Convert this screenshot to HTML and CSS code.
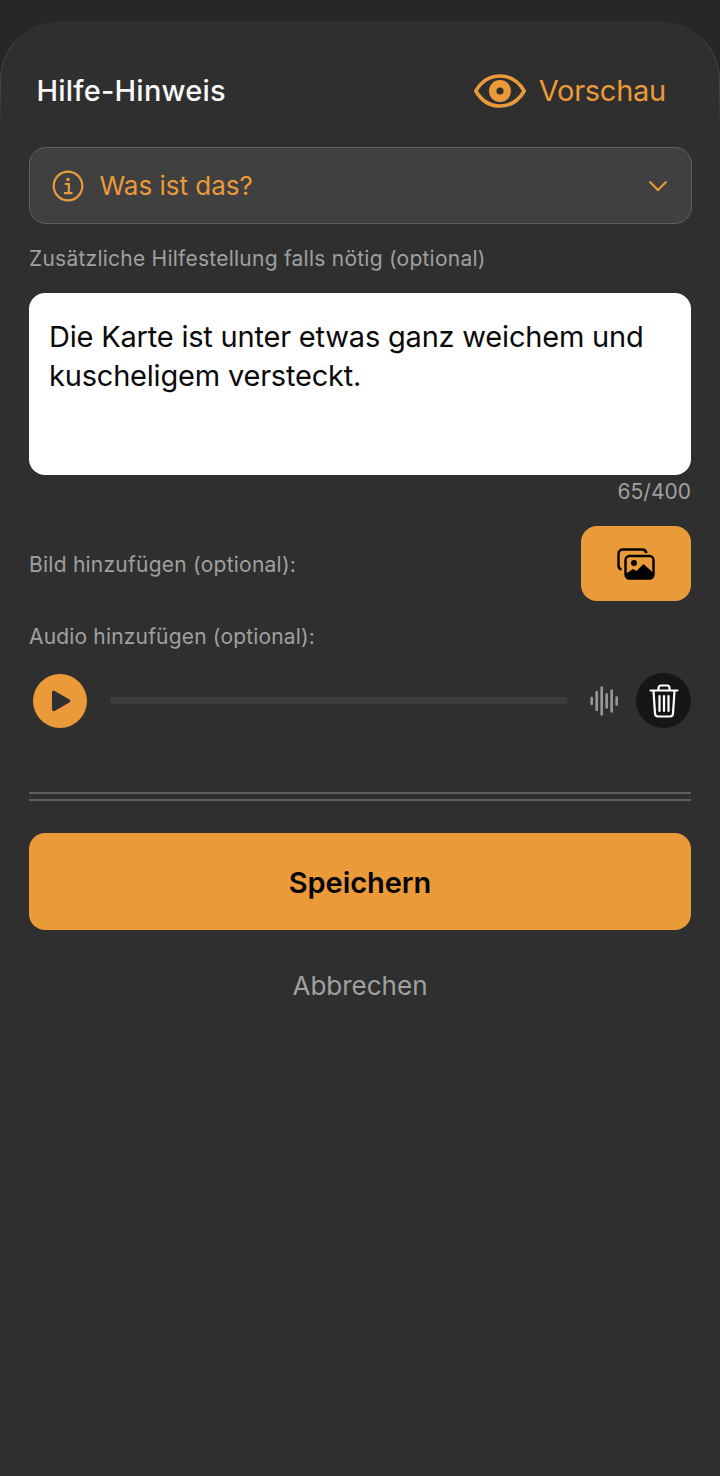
FILE: index.html
```html
<!DOCTYPE html>
<html lang="de">
<head>
<meta charset="utf-8">
<title>Hilfe-Hinweis</title>
<link rel="stylesheet" href="styles.css">
</head>
<body>
<main class="sheet">
  <header class="head">
    <h1 class="title">Hilfe-Hinweis</h1>
    <div class="preview">
      <svg class="eye" viewBox="0 0 52 34" fill="none">
        <path d="M1.800 17C7 8 15.500 2 26 2s19 6 24.200 15C45 26 36.500 32 26 32S7 26 1.800 17Z" stroke="#EB9A3A" stroke-width="3.600"/>
        <circle cx="26" cy="17" r="11" fill="#EB9A3A"/>
        <circle cx="26" cy="17" r="3.600" fill="#2F2F2F"/>
      </svg>
      <span>Vorschau</span>
    </div>
  </header>

  <div class="accordion">
    <svg class="info" viewBox="0 0 32 32" fill="none">
      <circle cx="16" cy="16" r="14.300" stroke="#EB9A3A" stroke-width="2.200"/>
      <circle cx="16" cy="9.500" r="1.800" fill="#EB9A3A"/>
      <path d="M12.800 14h4v9M12 23.200h8.500" stroke="#EB9A3A" stroke-width="2.200"/>
    </svg>
    <span class="accordion-text">Was ist das?</span>
    <svg class="chev" viewBox="0 0 20 12" fill="none"><path d="M1.500 1.500 10 10l8.500-8.500" stroke="#EB9A3A" stroke-width="2"/></svg>
  </div>

  <p class="label hint">Zusätzliche Hilfestellung falls nötig (optional)</p>
  <div class="textbox">Die Karte ist unter etwas ganz weichem und kuscheligem versteckt.</div>
  <p class="counter">65/400</p>

  <div class="image-row">
    <span class="label image-label">Bild hinzufügen (optional):</span>
    <button class="image-btn" type="button">
      <svg class="pics" viewBox="0 0 38 32" fill="none">
        <path d="M4.500 21.500C2.500 21 1.500 19.500 1.500 17.500V6C1.500 3 3.500 1.500 6 1.500h19c2.500 0 4 1.200 4.500 3.500" stroke="#000" stroke-width="2.400"/>
        <rect x="8.500" y="8" width="28" height="22.500" rx="4" stroke="#000" stroke-width="2.400"/>
        <circle cx="17" cy="15" r="3" fill="#000"/>
        <path d="M8.500 26 16 21l3.500 2 7-7 10 9v2c0 2-1.500 3.500-4 3.500h-20c-2.500 0-4-1.500-4-3.500Z" fill="#000"/>
      </svg>
    </button>
  </div>

  <p class="label audio-label">Audio hinzufügen (optional):</p>
  <div class="player">
    <span class="play">
      <svg class="play-icon" viewBox="0 0 20 22"><path d="M1 2.500C1 1 2.400.4 3.600 1.100l14.800 8.500c1.200.7 1.200 2.100 0 2.800L3.600 20.900C2.400 21.600 1 21 1 19.500Z" fill="#2F2F2F"/></svg>
    </span>
    <span class="track"></span>
    <svg class="wave" viewBox="0 0 28 30" fill="none" stroke="#999" stroke-width="2.600" stroke-linecap="round">
      <path d="M1.700 12v6M6.700 6v18M11.700 1.500v27M16.700 8.500v13M21.700 4.500v21M26.700 11.500v7"/>
    </svg>
    <span class="trash">
      <svg class="trash-icon" viewBox="0 0 30 34" fill="none" stroke="#fff" stroke-width="2.200" stroke-linecap="round" stroke-linejoin="round">
        <path d="M1.500 6.500h27M9.500 6V4c0-1.500 1-2.500 2.500-2.500h6c1.500 0 2.500 1 2.500 2.500v2M4.500 7l1.500 22.500c.1 2 1.300 3 3 3h12c1.700 0 2.900-1 3-3L25.500 7M10.500 12v15M15 12v15M19.500 12v15"/>
      </svg>
    </span>
  </div>

  <div class="rule"></div>

  <button class="save" type="button">Speichern</button>
  <p class="cancel">Abbrechen</p>
</main>
</body>
</html>
```

FILE: styles.css
```css
* { box-sizing: border-box; }

html, body {
  margin: 0;
  height: 100%;
}

body {
  background: #272727;
  padding-top: 22px;
  font-family: Inter, "Liberation Sans", sans-serif;
  overflow: hidden;
}

p, h1 { margin: 0; }

.sheet {
  position: relative;
  height: 1454px;
  background: #2F2F2F;
  border-radius: 58px 58px 0 0;
  padding: 0 29px;
}

.sheet::before {
  content: "";
  position: absolute;
  top: 0;
  left: 0;
  right: 0;
  height: 110px;
  border: 1.500px solid #474747;
  border-top-color: #333333;
  border-bottom: 0;
  border-radius: 58px 58px 0 0;
  -webkit-mask-image: linear-gradient(#000 55%, transparent);
  mask-image: linear-gradient(#000 55%, transparent);
  pointer-events: none;
}

.head {
  height: 125px;
  display: flex;
  align-items: center;
  justify-content: space-between;
  padding: 12px 25px 0 7.500px;
}

.title {
  font-size: 29px;
  font-weight: 500;
  letter-spacing: 0.2px;
  color: #F8F8F8;
}

.preview {
  display: flex;
  align-items: center;
  gap: 13px;
  font-size: 29px;
  color: #EB9A3A;
  letter-spacing: -0.25px;
}

.eye { width: 52px; height: 34px; }

.accordion {
  height: 77px;
  margin: 0 -0.5px;
  background: #404040;
  border: 1.500px solid #606060;
  border-radius: 17px;
  display: flex;
  align-items: center;
  padding: 0 23px 0 22px;
}

.info { width: 32px; height: 32px; }

.accordion-text {
  flex: 1;
  margin-left: 16px;
  font-size: 26px;
  color: #EB9A3A;
}

.chev { width: 20px; height: 12px; }

.label {
  font-size: 21px;
  color: #A0A0A0;
  letter-spacing: 0.24px;
  line-height: 26px;
}

.hint { margin-top: 22px; }

.textbox {
  height: 182px;
  margin-top: 21px;
  padding: 24px 20px;
  background: #fff;
  border-radius: 16px;
  color: #0A0A0A;
  font-size: 29px;
  line-height: 39px;
  letter-spacing: -0.2px;
}

.counter {
  margin-top: 4px;
  text-align: right;
  font-size: 21px;
  line-height: 26px;
  color: #A0A0A0;
}

.image-row {
  margin-top: 21px;
  display: flex;
  align-items: center;
  justify-content: space-between;
}

.image-label { padding-top: 2px; }

.image-btn {
  width: 110px;
  height: 75px;
  border: 0;
  border-radius: 16px;
  background: #EB9A3A;
  display: flex;
  align-items: center;
  justify-content: center;
  padding: 0;
}

.pics { width: 38px; height: 32px; }

.audio-label {
  margin-top: 22px;
  padding-top: 1px;
  letter-spacing: 0.17px;
}

.player {
  margin-top: 23px;
  display: flex;
  align-items: center;
  padding-left: 4px;
}

.play {
  width: 54px;
  height: 54px;
  border-radius: 50%;
  background: #EB9A3A;
  display: flex;
  align-items: center;
  justify-content: center;
  padding-left: 2px;
}

.play-icon { width: 20px; height: 22px; }

.track {
  width: 459px;
  height: 7px;
  margin-left: 23px;
  border-radius: 4px;
  background: #3D3D3D;
}

.wave {
  width: 28px;
  height: 30px;
  margin-left: 22px;
}

.trash {
  width: 55px;
  height: 55px;
  margin-left: 18px;
  border-radius: 50%;
  background: #161616;
  display: flex;
  align-items: center;
  justify-content: center;
}

.trash-icon { width: 30px; height: 34px; }

.rule {
  height: 9px;
  margin-top: 64px;
  border-top: 2px solid #5E5E5E;
  border-bottom: 2px solid #5E5E5E;
}

.save {
  display: block;
  width: 100%;
  height: 97px;
  margin-top: 32px;
  padding: 2px 0 0;
  border: 0;
  border-radius: 16px;
  background: #EB9A3A;
  color: #050505;
  font-family: inherit;
  font-size: 29px;
  font-weight: 600;
  letter-spacing: -0.05px;
}

.cancel {
  margin-top: 38px;
  text-align: center;
  font-size: 26px;
  line-height: 36px;
  color: #A0A0A0;
}
```
